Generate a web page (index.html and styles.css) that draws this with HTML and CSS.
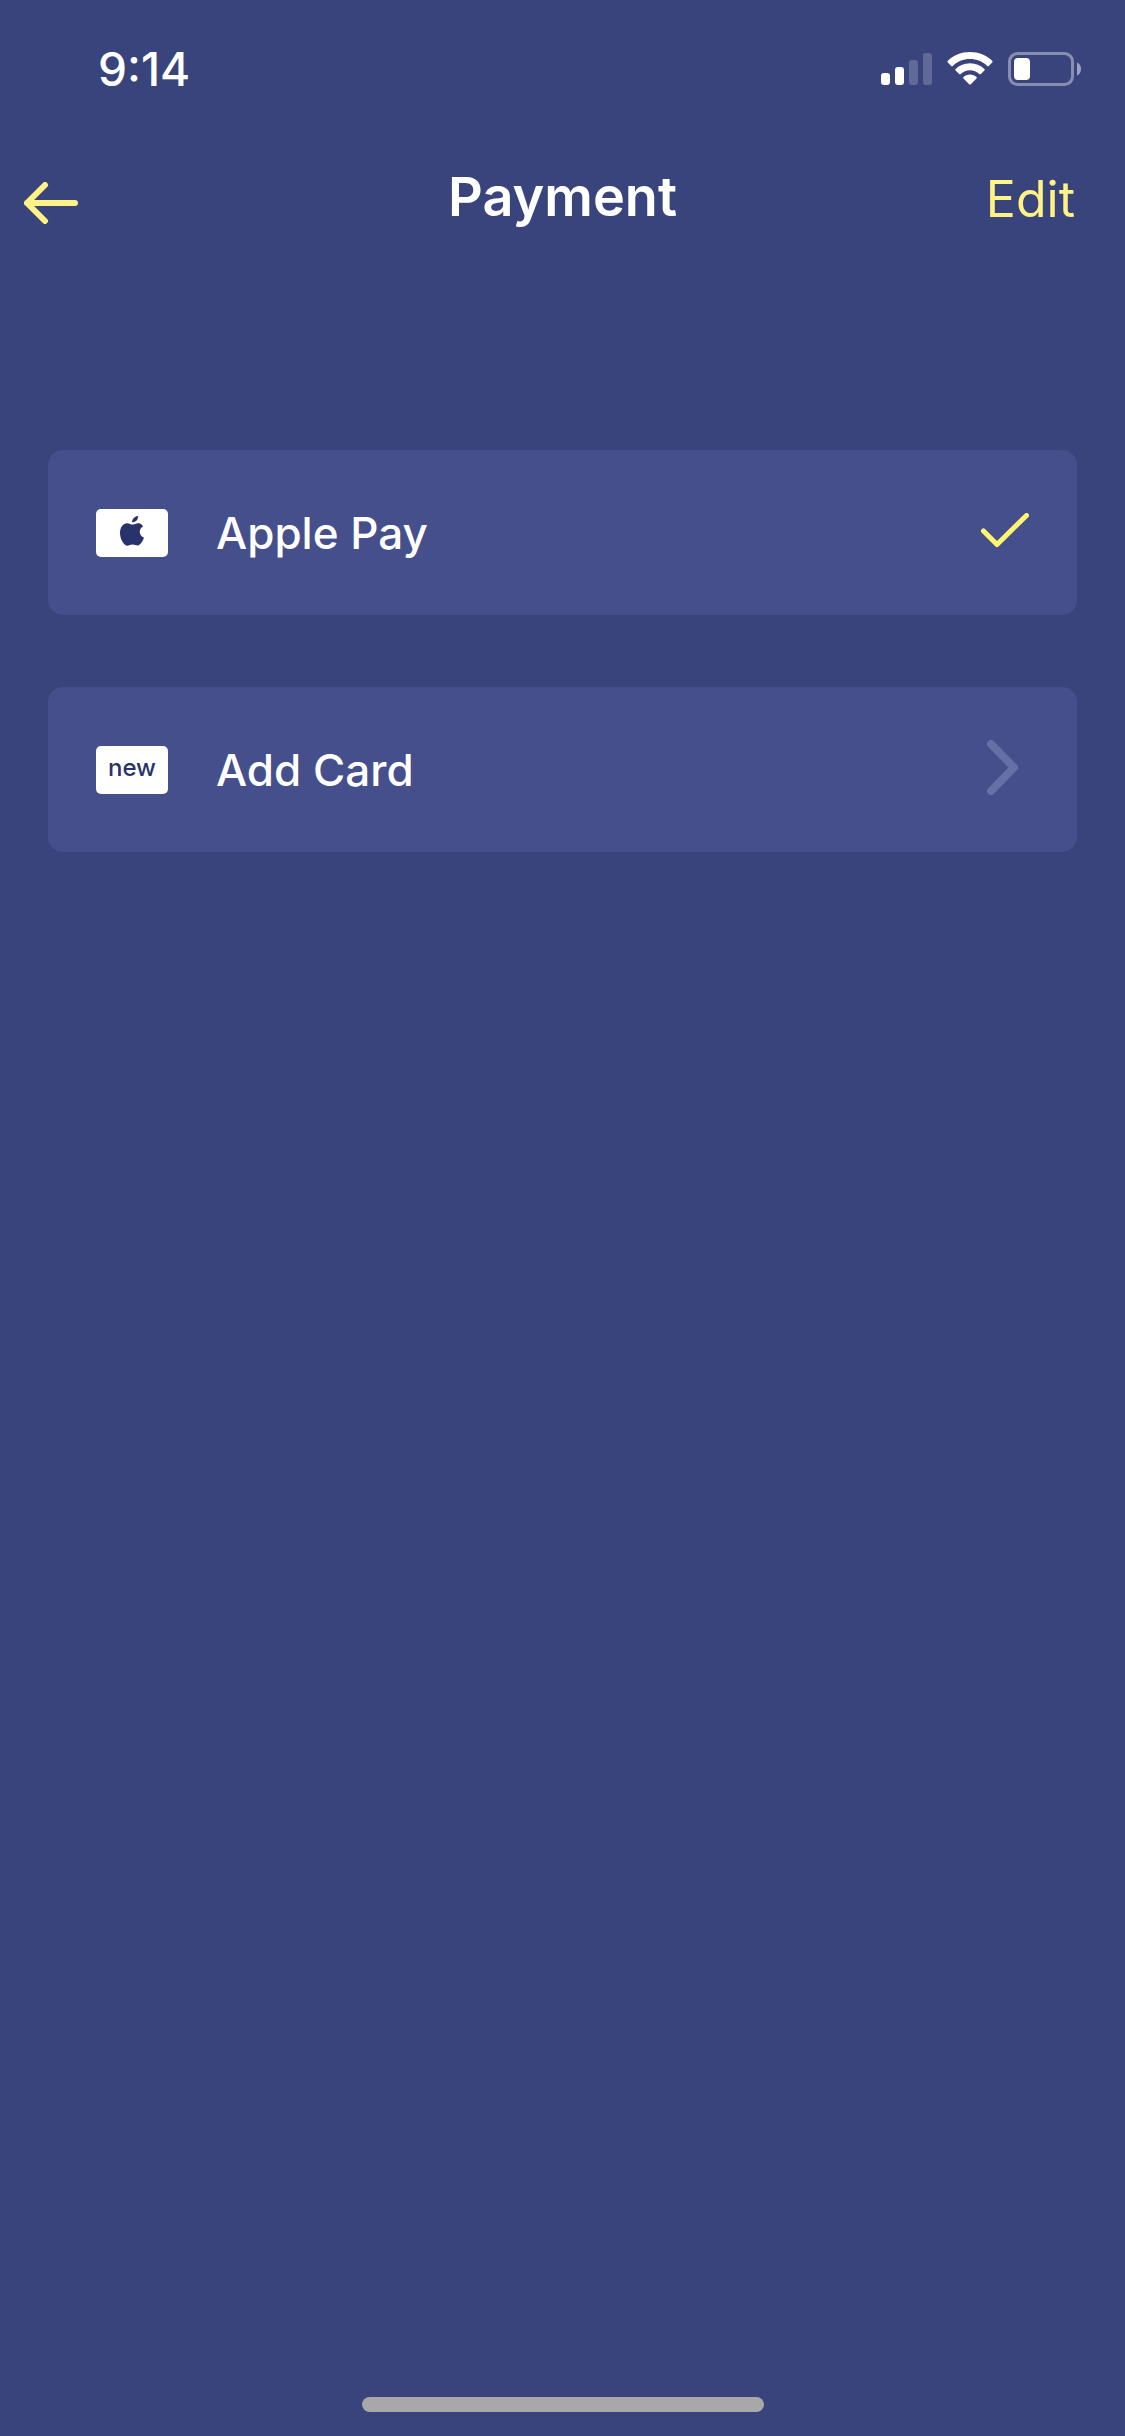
FILE: index.html
```html
<!DOCTYPE html>
<html lang="en">
<head>
  <meta charset="utf-8">
  <meta name="viewport" content="width=device-width, initial-scale=1">
  <title>Payment</title>
  <link rel="stylesheet" href="styles.css">
</head>
<body>
  <div class="screen">
    <div class="status-bar">
      <time class="status-time">9:14</time>
      <div class="status-icons">
        <svg class="signal" width="51" height="34" viewBox="0 0 51 34" fill="#fff" role="img" aria-label="Signal">
          <rect x="0" y="21" width="9" height="12" rx="3"/>
          <rect x="14" y="15" width="9" height="18" rx="3"/>
          <rect x="28" y="8" width="9" height="25" rx="3" opacity=".2"/>
          <rect x="42" y="1" width="9" height="32" rx="3" opacity=".2"/>
        </svg>
        <svg class="wifi" width="46" height="34" viewBox="0 0 46 34" fill="#fff" role="img" aria-label="Wi-Fi">
          <path d="M23 0C31.600 0 39.400 3.300 45.200 8.800Q46 9.600 45.200 10.400L41.700 13.900Q41 14.600 40.200 13.900C35.700 9.600 29.700 7 23 7S10.300 9.600 5.800 13.900Q5 14.600 4.300 13.900L.8 10.400Q0 9.600.8 8.800C6.600 3.300 14.400 0 23 0Z"/>
          <path d="M23 11.300C28.600 11.300 33.600 13.400 37.400 16.900Q38.200 17.700 37.400 18.500L33.900 22Q33.100 22.700 32.300 22C29.800 19.700 26.600 18.300 23 18.300S16.200 19.700 13.700 22Q12.900 22.700 12.100 22L8.600 18.500Q7.800 17.700 8.600 16.900C12.400 13.400 17.400 11.300 23 11.300Z"/>
          <path d="M23 22.500C25.500 22.500 27.800 23.400 29.500 24.900Q30.300 25.700 29.500 26.500L23.800 32.300Q23 33 22.200 32.300L16.500 26.500Q15.700 25.700 16.500 24.900C18.200 23.400 20.500 22.500 23 22.500Z"/>
        </svg>
        <svg class="battery" width="74" height="34" viewBox="0 0 74 34" role="img" aria-label="Battery">
          <rect x="1.500" y="1.500" width="63" height="31" rx="8" fill="none" stroke="#fff" stroke-width="3" opacity=".4"/>
          <rect x="6" y="6" width="16" height="22" rx="4" fill="#fff"/>
          <path d="M69 10.500C71.500 11.500 73 14 73 17S71.500 22.500 69 23.500Z" fill="#fff" opacity=".5"/>
        </svg>
      </div>
    </div>

    <header class="nav">
      <button class="back" type="button" aria-label="Back">
        <svg width="54" height="42" viewBox="0 0 54 42" fill="none" stroke="#fff385" stroke-width="6" stroke-linecap="round" stroke-linejoin="round">
          <path d="M51 21H3M21 3L3 21L21 39"/>
        </svg>
      </button>
      <h1 class="title">Payment</h1>
      <button class="edit" type="button">Edit</button>
    </header>

    <main class="methods">
      <button class="method" type="button" aria-pressed="true">
        <span class="badge">
          <svg width="24" height="30" viewBox="0 0 24 30" fill="#29336b" aria-hidden="true">
            <path d="M18.200 0C18.400 3.400 15.500 6.500 12 6.300C11.800 3.200 14.900.1 18.200 0Z"/>
            <path d="M23 10.400C20.700 11.800 19.700 13.700 19.800 16C19.900 18.800 21.600 20.700 24 21.700C23.100 24.400 21.100 27.700 19.100 29.100C17.200 30.500 15.400 28.600 12.600 28.600C9.800 28.600 8.200 30.400 6.200 29.500C3 28 0 22.300 0 17C0 11.300 2.800 7.400 7.300 7.200C9.300 7.200 11 8.600 12.500 8.600C14 8.600 16.400 7 18.900 7.300C20.500 7.400 22.100 8.500 23 10.400Z"/>
          </svg>
        </span>
        <span class="label">Apple Pay</span>
        <svg class="check" width="48" height="40" viewBox="0 0 48 40" fill="none" stroke="#fff56e" stroke-width="5" stroke-linecap="round" stroke-linejoin="round" aria-hidden="true">
          <path d="M2.500 18L16 31.500L45.500 2.500"/>
        </svg>
      </button>
      <button class="method" type="button">
        <span class="badge badge-new">new</span>
        <span class="label">Add Card</span>
        <svg class="chevron" width="31" height="60" viewBox="0 0 31 60" fill="none" stroke="#6570a6" stroke-width="8" stroke-linecap="round" stroke-linejoin="round" aria-hidden="true">
          <path d="M4 4L27 27.500L4 51"/>
        </svg>
      </button>
    </main>

    <div class="home-indicator"></div>
  </div>
</body>
</html>
```
FILE: styles.css
```css
* {
  box-sizing: border-box;
}

body {
  margin: 0;
  background: #3a447c;
  color: #fff;
  font-family: Inter, "Liberation Sans", sans-serif;
}

button {
  margin: 0;
  padding: 0;
  border: 0;
  background: none;
  color: inherit;
  font: inherit;
  text-align: left;
  cursor: pointer;
}

svg {
  display: block;
  flex: none;
}

.screen {
  display: flex;
  flex-direction: column;
  min-height: 100vh;
}

.status-bar {
  display: flex;
  align-items: center;
  justify-content: space-between;
  height: 138px;
  padding: 0 43px 0 98px;
}

.status-time {
  font-size: 46px;
  font-weight: 500;
  line-height: 56px;
}

.status-icons {
  display: flex;
  gap: 15px;
}

.nav {
  display: grid;
  grid-template-columns: 1fr auto 1fr;
  align-items: center;
  height: 120px;
  padding: 0 50px 2px 24px;
}

.back {
  justify-self: start;
  padding: 12px 0 0;
}

.title {
  margin: 0 0 0 26px;
  font-size: 54px;
  font-weight: 600;
  line-height: 64px;
}

.edit {
  justify-self: end;
  padding-top: 4px;
  color: #fff385;
  font-size: 50px;
  line-height: 64px;
}

.methods {
  display: flex;
  flex: 1;
  flex-direction: column;
  gap: 72px;
  padding: 192px 48px 48px;
}

.method {
  display: flex;
  align-items: center;
  min-height: 165px;
  padding: 0 48px;
  border-radius: 15px;
  background: #444f8c;
}

.badge {
  display: flex;
  flex: none;
  align-items: center;
  justify-content: center;
  width: 72px;
  height: 48px;
  margin-right: 48px;
  padding-bottom: 4px;
  border-radius: 5px;
  background: #fff;
}

.badge-new {
  color: #29336b;
  font-size: 24px;
  font-weight: 500;
  line-height: 32px;
}

.label {
  flex: 1;
  font-size: 44px;
  font-weight: 500;
  line-height: 56px;
}

.chevron {
  margin-right: 11px;
}

.home-indicator {
  width: 402px;
  max-width: 36%;
  height: 15px;
  margin: 0 auto 24px;
  border-radius: 8px;
  background: #a8a8a8;
}
```
